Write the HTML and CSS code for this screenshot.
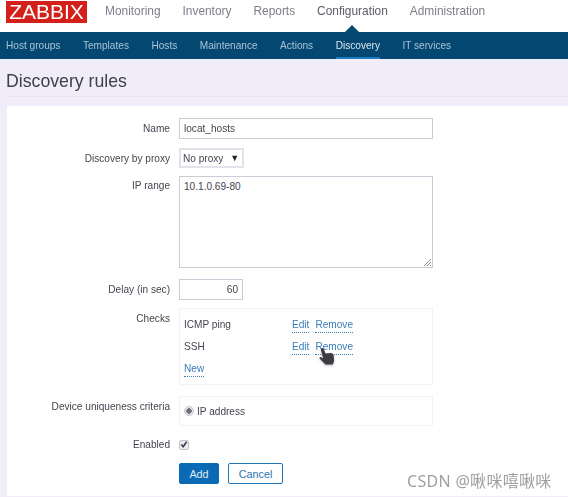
FILE: index.html

```html
<!DOCTYPE html>
<html lang="en">
<head>
  <meta charset="UTF-8" />
  <meta name="viewport" content="width=device-width, initial-scale=1.0"/>
  <title>Discovery rules</title>
  <link rel="stylesheet" href="styles.css">
</head>
<body>
  <header class="top">
    <div class="logo">ZABBIX</div>
    <nav class="main-nav">
      <a>Monitoring</a>
      <a>Inventory</a>
      <a>Reports</a>
      <a class="current">Configuration</a>
      <a>Administration</a>
    </nav>
  </header>
  <nav class="sub-nav">
    <a>Host groups</a>
    <a>Templates</a>
    <a>Hosts</a>
    <a>Maintenance</a>
    <a>Actions</a>
    <a class="current">Discovery</a>
    <a>IT services</a>
  </nav>
  <h1 class="title">Discovery rules</h1>

  <form class="card">
    <div class="row row-name">
      <label>Name</label>
      <div class="field wide">locat_hosts</div>
    </div>
    <div class="row row-proxy">
      <label>Discovery by proxy</label>
      <div class="field select">No proxy <span class="arrow">▼</span></div>
    </div>
    <div class="row row-ip">
      <label>IP range</label>
      <div class="field wide area">
        10.1.0.69-80
        <svg class="grip" width="9" height="9" viewBox="0 0 9 9"><path d="M1 8 8 1M4 8 8 4M7 8 8 7" stroke="#8a8a8a" fill="none"/></svg>
      </div>
    </div>
    <div class="row row-delay">
      <label>Delay (in sec)</label>
      <div class="field delay">60</div>
    </div>
    <div class="row row-checks">
      <label>Checks</label>
      <div class="box checks">
        <div class="check"><span class="check-name">ICMP ping</span><a class="link">Edit</a><a class="link">Remove</a></div>
        <div class="check"><span class="check-name">SSH</span><a class="link">Edit</a><a class="link">Remove</a></div>
        <div class="check"><a class="link">New</a></div>
      </div>
    </div>
    <div class="row row-unique">
      <label>Device uniqueness criteria</label>
      <div class="box unique"><span class="radio"></span>IP address</div>
    </div>
    <div class="row row-enabled">
      <label>Enabled</label>
      <span class="checkbox">
        <svg width="9" height="9" viewBox="0 0 9 9"><path d="M1.5 4.5 3.600 7 7.500 1.500" stroke="#3a3a44" stroke-width="1.8" fill="none"/></svg>
      </span>
    </div>
    <div class="row row-buttons">
      <label></label>
      <button type="button" class="btn primary">Add</button>
      <button type="button" class="btn">Cancel</button>
    </div>
  </form>

  <svg class="cursor" width="18" height="20" viewBox="0 0 18 20">
    <path d="M3.500 1.200c.9-.6 1.800-.2 2.200.8l1.800 4.600 5-.6c2 0 3 1 3.200 2.800l.3 4.200c0 2-.6 3.200-1.500 4.500H7.500L1.800 11.800c-.7-.9.2-2.200 1.400-1.600l2 1.300L3 3.200c-.2-.8 0-1.600.5-2z" fill="#3d3d40"/>
  </svg>
  <div class="watermark">CSDN @啾咪嘻啾咪</div>
</body>
</html>
```

FILE: styles.css

```css
* {
  box-sizing: border-box;
}

body {
  margin: 0;
  height: 497px;
  overflow: hidden;
  position: relative;
  background: #f1edf8;
  font-family: "Liberation Sans", sans-serif;
  font-size: 10.1px;
  color: #454551;
  filter: blur(0.35px);
}

.top {
  height: 32px;
  background: #fff;
  display: flex;
}

.logo {
  width: 81px;
  height: 22px;
  margin: 1px 0 0 6px;
  background: #d3201a;
  color: #fff;
  font-size: 21px;
  line-height: 22px;
  text-align: center;
}

.main-nav {
  display: flex;
  gap: 22px;
  margin-left: 18px;
  font-size: 11.9px;
  line-height: 22px;
  color: #7d7d8c;
}

.main-nav .current {
  position: relative;
  color: #5b5b6b;
}

.main-nav .current::after {
  content: "";
  position: absolute;
  left: 28px;
  top: 25px;
  border: 7px solid transparent;
  border-top: 0;
  border-bottom-color: #044872;
}

.sub-nav {
  height: 27px;
  background: #044872;
  display: flex;
  gap: 22.5px;
  padding-left: 6px;
  line-height: 27px;
  color: #a9c3d6;
}

.sub-nav .current {
  color: #d9e6f0;
  border-bottom: 2px solid #1f7dc4;
}

.title {
  margin: 0 0 0 6px;
  height: 38px;
  border-bottom: 1px solid #e8e3ef;
  font-size: 17.7px;
  font-weight: normal;
  line-height: 44px;
  color: #3f4048;
}

.card {
  margin: 9px 0 0 7px;
  height: 390px;
  padding-top: 12px;
  background: #fff;
}

.row {
  display: flex;
  gap: 9px;
  align-items: flex-start;
}

.row label {
  width: 163px;
  flex: none;
  text-align: right;
  line-height: 21px;
}

.field {
  height: 21px;
  padding: 0 4px;
  border: 1px solid #cfc9d8;
  line-height: 19px;
  background: #fff;
}

.wide {
  width: 254px;
}

.row-proxy {
  margin-top: 9px;
}

.select {
  width: 65px;
  height: 20px;
  border: 2px solid #e4e1ea;
  padding: 0 2px;
  line-height: 16px;
  white-space: nowrap;
}

.arrow {
  font-size: 9px;
  margin-left: 4px;
  vertical-align: 1px;
  color: #222;
}

.row-ip {
  margin-top: 7px;
}

.row-ip label {
  line-height: 20px;
}

.area {
  height: 92px;
  position: relative;
  line-height: 19px;
}

.grip {
  position: absolute;
  right: 0;
  bottom: 0;
}

.row-delay {
  margin-top: 11px;
}

.delay {
  width: 64px;
  text-align: right;
}

.row-checks {
  margin-top: 8px;
}

.row-checks label {
  line-height: 22px;
}

.box {
  width: 254px;
  border: 1px solid #f7f0fb;
  padding: 0 4px;
}

.checks {
  height: 77px;
  padding-top: 6px;
}

.check {
  display: flex;
  height: 22px;
  line-height: 20px;
}

.check-name {
  width: 108px;
}

.link {
  color: #3b7dbb;
  height: 15px;
  margin: 3px 6px 0 0;
  line-height: 14px;
  border-bottom: 1px dotted #3b7dbb;
}

.row-unique {
  margin-top: 11px;
}

.row-unique label {
  line-height: 22px;
}

.unique {
  height: 30px;
  display: flex;
  align-items: center;
  gap: 3px;
}

.radio {
  width: 10px;
  height: 10px;
  border-radius: 50%;
  border: 1px solid #c7c2cf;
  background: radial-gradient(circle, #6f6f78 0 2.5px, #e9e6ee 3px);
}

.row-enabled {
  margin-top: 8px;
  align-items: center;
}

.checkbox {
  width: 10px;
  height: 10px;
  border: 1px solid #c7c2cf;
  border-radius: 2px;
  background: #ece9f0;
  display: flex;
  align-items: center;
  justify-content: center;
}

.row-buttons {
  margin-top: 8px;
}

.btn {
  height: 21px;
  width: 55px;
  padding: 0;
  border: 1px solid #1f77b8;
  border-radius: 2px;
  background: #fff;
  color: #2d74ad;
  font: inherit;
  font-size: 10.8px;
}

.btn.primary {
  width: 40px;
  background: #0a6ab4;
  color: #dfeaf4;
  border-color: #0a6ab4;
}

.cursor {
  position: absolute;
  left: 318px;
  top: 347px;
  filter: drop-shadow(0 1px 1px rgba(90, 70, 110, 0.4));
}

.watermark {
  position: absolute;
  left: 407px;
  top: 468px;
  font-family: "Noto Sans", "Noto Sans CJK SC", sans-serif;
  font-size: 16px;
  letter-spacing: 0.3px;
  color: #a0a0a0;
  white-space: nowrap;
}
```
